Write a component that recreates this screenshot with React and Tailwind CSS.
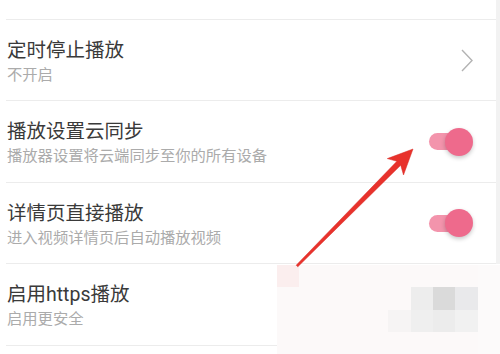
import React from "react";

function Toggle() {
  return (
    <div className="relative w-[44px] h-[28px]">
      <div className="absolute left-0 top-[5.5px] w-[34px] h-[17px] rounded-full bg-[#f394ac]" />
      <div className="absolute right-0 top-0 w-[28px] h-[28px] rounded-full bg-[#ee6a8c] shadow-[0_2px_4px_rgba(0,0,0,0.22)]" />
    </div>
  );
}

function Chevron() {
  return (
    <svg width="12" height="23" viewBox="0 0 12 23">
      <polyline points="1,1 11,11.5 1,22" fill="none" stroke="#b3b3b3" strokeWidth="1.4" />
    </svg>
  );
}

function Row({ title, sub, right, h }) {
  return (
    <div className={`flex items-center justify-between border-t border-[#ececec] pl-[1px] pr-[23px] ${h}`}>
      <div className="flex flex-col self-start pt-[21px]">
        <div className="text-[19.5px] leading-none text-[#3a3a3a]">{title}</div>
        <div className="mt-[7px] text-[15.3px] leading-none text-[#ababab]">{sub}</div>
      </div>
      {right}
    </div>
  );
}

const mosaic = [
  ["#fbeeee", "#fcf9f9", "#fcf9f9", "#fcf9f9", "#fcf9f9", "#fcf9f9", "#fcf9f9", "#fcf9f9", "#fcf9f9", "#fcfafa"],
  ["#fcf9f9", "#fcf9f9", "#fcf9f9", "#fcf9f9", "#fcf9f9", "#fcf9f9", "#ededed", "#dadada", "#e9e9eb", "#fcfafa"],
  ["#fcf9f9", "#fcf9f9", "#fcf9f9", "#fcf9f9", "#fcf9f9", "#f6f4f4", "#efefef", "#ececec", "#f1f1f1", "#fcfafa"],
  ["#fcf9f9", "#fcf9f9", "#fcf9f9", "#fcf9f9", "#fcf9f9", "#fcf9f9", "#fcf9f9", "#fcf9f9", "#fcf9f9", "#fcfafa"],
];

export default function App() {
  return (
    <div className="relative w-[500px] h-[354px] overflow-hidden bg-white font-['Roboto','Noto_Sans_CJK_SC',sans-serif]">
      <div className="flex">
        <div className="w-[496px] pl-[6px]">
          <div className="h-[19px]" />
          <Row h="h-[81px]" title="定时停止播放" sub="不开启" right={<Chevron />} />
          <Row h="h-[82px]" title="播放设置云同步" sub="播放器设置将云端同步至你的所有设备" right={<Toggle />} />
          <Row h="h-[81px]" title="详情页直接播放" sub="进入视频详情页后自动播放视频" right={<Toggle />} />
          <Row h="h-[82px]" title="启用https播放" sub="启用更安全" right={null} />
          <div className="border-t border-[#ececec] h-[20px]" />
        </div>
        <div className="w-[4px] h-[264px] bg-[#f2f2f2]" />
      </div>

      {/* mosaic overlay */}
      <div className="absolute left-[277px] top-[265px] right-0 bottom-0 grid grid-cols-10 grid-rows-4 bg-[#fcf9f9]">
        {mosaic.flat().map((c, i) => (
          <div key={i} style={{ backgroundColor: c }} />
        ))}
      </div>

      {/* red arrow */}
      <svg className="absolute left-0 top-0" width="500" height="354" viewBox="0 0 500 354">
        <polygon
          points="413,149 403.5,175 400.7,165.2 297.8,266.8 296.2,265.2 396.9,161.3 387.3,158.6"
          fill="#e8322c"
          stroke="#d92a25"
          strokeWidth="0.5"
          strokeLinejoin="round"
        />
      </svg>
    </div>
  );
}
